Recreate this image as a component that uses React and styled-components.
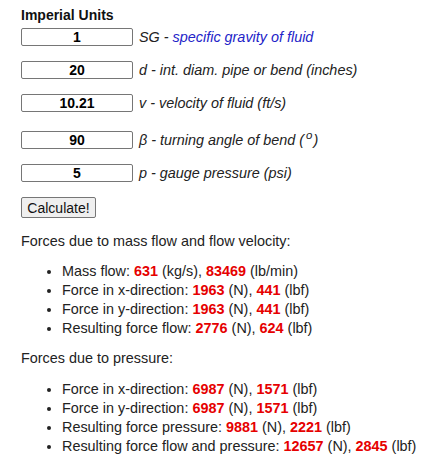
import styled, { createGlobalStyle } from "styled-components";

const GlobalStyle = createGlobalStyle`
	body {
		margin: 0;
		background: #ffffff;
		font-family: "Liberation Sans", Arial, sans-serif;
		color: #222222;
	}
`;

const Page = styled.div`
	padding: 6px 0 0 21px;
	font-size: 14.4px;
	line-height: 19px;
`;

const Title = styled.div`
	font-weight: bold;
	font-size: 14px;
	line-height: 18px;
	color: #111111;
	margin-bottom: 4px;
`;

const Form = styled.form`
	display: flex;
	flex-direction: column;
	align-items: flex-start;
	gap: 15px;
`;

const Row = styled.div`
	display: flex;
	align-items: center;
	gap: 5px;
	height: 18px;
	margin-top: ${(p) => (p.$sup ? "4px" : "0")};
`;

const Field = styled.input`
	box-sizing: border-box;
	width: 112px;
	height: 18px;
	padding: 0;
	border: 1px solid #767676;
	border-radius: 2px;
	text-align: center;
	font-family: "Liberation Sans", Arial, sans-serif;
	font-size: 14px;
	font-weight: bold;
	color: #000000;
	background: #ffffff;
`;

const Label = styled.span`
	font-style: italic;
	white-space: nowrap;
	color: #222222;
	padding-left: 1px;
`;

const Link = styled.span`
	color: #2323c8;
`;

const Sup = styled.sup`
	font-size: 11.5px;
	line-height: 0;
	vertical-align: 6px;
	margin: 0 1px 0 2px;
`;

const Button = styled.button`
	box-sizing: border-box;
	width: 75px;
	height: 21px;
	padding: 0;
	border: 1px solid #767676;
	border-radius: 2px;
	background: #efefef;
	font-family: "Liberation Sans", Arial, sans-serif;
	font-size: 14px;
	color: #111111;
`;

const Heading = styled.p`
	margin: ${(p) => (p.$first ? "14px" : "11px")} 0 0;
`;

const List = styled.ul`
	margin: ${(p) => (p.$gap || 11)}px 0 0;
	padding-left: 41px;
	list-style: disc;
`;

const Value = styled.b`
	color: #e60000;
`;

const inputs = [
	{ value: "1", label: <>SG - <Link>specific gravity of fluid</Link></> },
	{ value: "20", label: "d - int. diam. pipe or bend (inches)" },
	{ value: "10.21", label: "v - velocity of fluid (ft/s)" },
	{ value: "90", label: <>β - turning angle of bend (<Sup>o</Sup>)</>, sup: true },
	{ value: "5", label: "p - gauge pressure (psi)" },
];

const flow = [
	["Mass flow", "631", "(kg/s)", "83469", "(lb/min)"],
	["Force in x-direction", "1963", "(N)", "441", "(lbf)"],
	["Force in y-direction", "1963", "(N)", "441", "(lbf)"],
	["Resulting force flow", "2776", "(N)", "624", "(lbf)"],
];

const pressure = [
	["Force in x-direction", "6987", "(N)", "1571", "(lbf)"],
	["Force in y-direction", "6987", "(N)", "1571", "(lbf)"],
	["Resulting force pressure", "9881", "(N)", "2221", "(lbf)"],
	["Resulting force flow and pressure", "12657", "(N)", "2845", "(lbf)"],
];

function Results({ rows, gap }) {
	return (
		<List $gap={gap}>
			{rows.map(([name, a, ua, b, ub]) => (
				<li key={name}>
					{name}: <Value>{a}</Value> {ua}, <Value>{b}</Value> {ub}
				</li>
			))}
		</List>
	);
}

export default function App() {
	return (
		<>
			<GlobalStyle />
			<Page>
				<Title>Imperial Units</Title>
				<Form onSubmit={(e) => e.preventDefault()}>
					{inputs.map((f) => (
						<Row key={f.value} $sup={f.sup}>
							<Field defaultValue={f.value} />
							<Label>{f.label}</Label>
						</Row>
					))}
					<Button type="submit">Calculate!</Button>
				</Form>
				<Heading $first>Forces due to mass flow and flow velocity:</Heading>
				<Results rows={flow} />
				<Heading>Forces due to pressure:</Heading>
				<Results rows={pressure} gap={12} />
			</Page>
		</>
	);
}
